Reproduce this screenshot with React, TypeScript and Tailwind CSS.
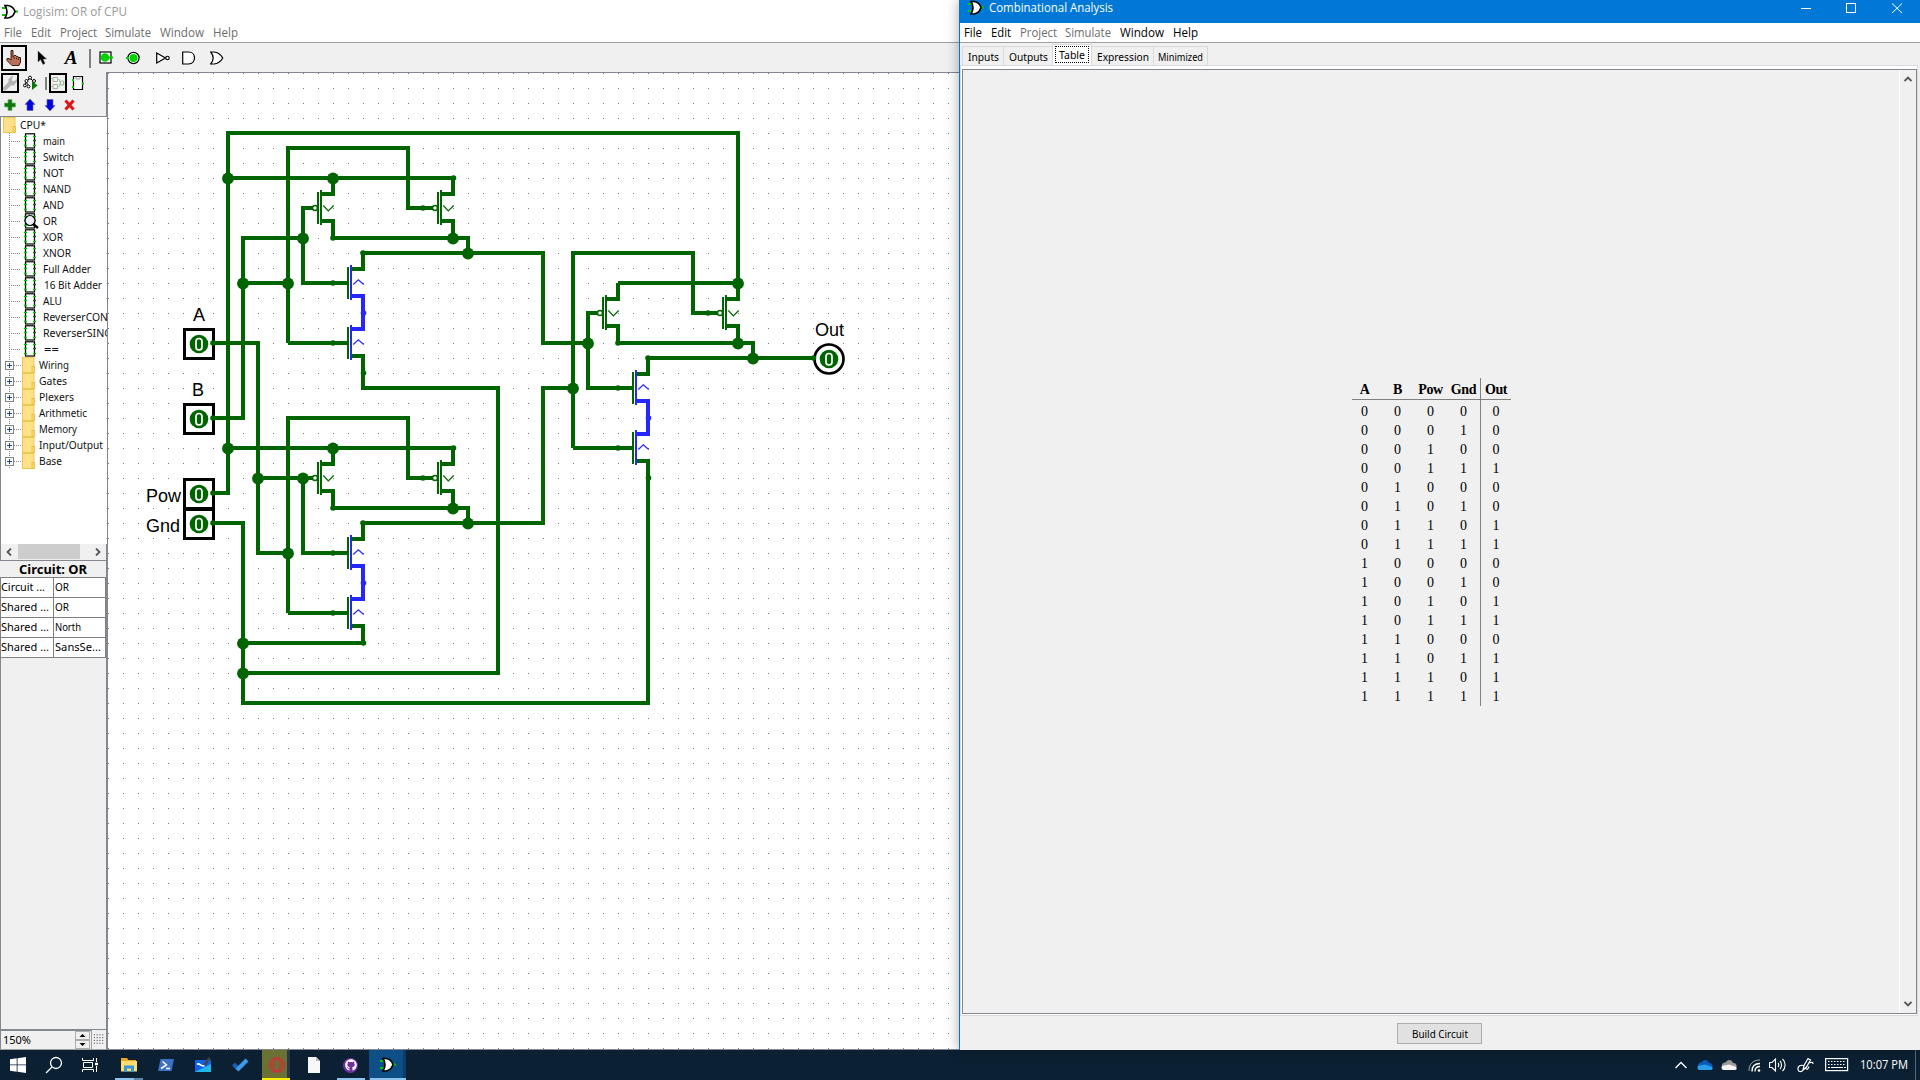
import React from "react";
import { FaGithub } from "react-icons/fa";

const SEGOE = "font-['Open_Sans','Noto_Sans',sans-serif]";
const TAHOMA = "font-['Noto_Sans','Open_Sans',sans-serif]";

/* ---------- shared ---------- */

function GateLogo() {
  return (
    <svg width="16" height="16" viewBox="0 0 16 16" className="shrink-0">
      <path d="M0 4H4M0 11H4" stroke="#00c800" strokeWidth="2" />
      <path d="M12 7.5H16" stroke="#00c800" strokeWidth="2" />
      <path d="M3 1.5H6C9.500 2 12 4.500 13 7.500C12 10.500 9.500 13.500 6 14H3C5.500 10 5.500 5.500 3 1.500Z" fill="#fff" stroke="#000" strokeWidth="1.600" />
    </svg>
  );
}

function Label({ w, children, className = "" }: { w: number; children: string; className?: string }) {
  return (
    <svg width={w} height="18" className={"block shrink-0 overflow-visible " + className}>
      <text x="0" y="13" textLength={w} lengthAdjust="spacingAndGlyphs" fill="currentColor">
        {children}
      </text>
    </svg>
  );
}

/* ---------- toolbars ---------- */

function MainToolbar() {
  return (
    <div className="flex h-[29px] items-center bg-[#f0f0f0] pl-px pt-[1px]">
      <div className="flex h-[26px] w-[26px] items-center justify-center border-2 border-black">
        <svg width="18" height="18" viewBox="0 0 18 18">
          <path d="M6 1.500H8V8L9 6.500H11L11.500 7.500H13L13.500 8.500H15.500V13L14 16.500H7L2 11.500V9.500H4L6 11Z" fill="#b87058" stroke="#3c1c10" strokeWidth="1" />
          <path d="M9 8V10M11.500 8.500V10.500M13.500 9V11" stroke="#3c1c10" strokeWidth=".8" />
        </svg>
      </div>
      <svg width="12" height="16" viewBox="0 0 12 16" className="ml-[10px]">
        <path d="M1 1V12L3.500 9.500L6 14.500L8 13.500L6 9H9.500Z" fill="#000" stroke="#555" strokeWidth=".4" />
      </svg>
      <span className="ml-[15px] w-[14px] text-center font-['Liberation_Serif',serif] text-[19px] leading-[26px] font-bold italic">A</span>
      <div className="ml-[11px] h-[19px] w-[2px] bg-[#808080]" />
      <svg width="14" height="14" viewBox="0 0 14 14" className="ml-[8px]">
        <rect x="1" y="1" width="11" height="11" fill="#fff" stroke="#000" strokeWidth="1.200" />
        <circle cx="6" cy="6.500" r="4.300" fill="#00d200" />
        <path d="M10 6.500H14" stroke="#00d200" strokeWidth="2" />
      </svg>
      <svg width="14" height="14" viewBox="0 0 14 14" className="ml-[13px]">
        <circle cx="7.500" cy="7" r="5.600" fill="#fff" stroke="#000" strokeWidth="1.200" />
        <circle cx="7.500" cy="7" r="4" fill="#00d200" />
        <path d="M0 7H3" stroke="#00d200" strokeWidth="2" />
      </svg>
      <svg width="14" height="14" viewBox="0 0 14 14" className="ml-[16px]">
        <path d="M.7 2V12L9.500 7Z" fill="#fff" stroke="#000" strokeWidth="1.200" />
        <circle cx="11.500" cy="7" r="1.700" fill="#fff" stroke="#000" strokeWidth="1.100" />
      </svg>
      <svg width="14" height="14" viewBox="0 0 14 14" className="ml-[12px]">
        <path d="M.7 1H6.500C14.500 1 14.500 13 6.500 13H.7Z" fill="#fff" stroke="#000" strokeWidth="1.200" />
      </svg>
      <svg width="14" height="14" viewBox="0 0 14 14" className="ml-[14px]">
        <path d="M.7 1H4C9 1.500 11 4 12.800 7C11 10 9 12.500 4 13H.7C4 9 4 5 .7 1Z" fill="#fff" stroke="#000" strokeWidth="1.200" />
      </svg>
    </div>
  );
}

function ExplorerToolbars() {
  return (
    <div className="h-[44px] bg-[#f0f0f0] pl-px">
      <div className="flex h-[22px] items-center">
        <div className="flex h-[20px] w-[18px] items-center justify-center border-2 border-black">
          <svg width="14" height="16" viewBox="0 0 14 16">
            <path d="M2 13.500L8 7.500" stroke="#b4b4b4" strokeWidth="4" strokeLinecap="round" />
            <path d="M5.500 7.500V4L9 1H10.500L9 3.500V6H11.500L14 4V6.500L11 10.500H8Z" fill="#b4b4b4" />
          </svg>
        </div>
        <svg width="15" height="16" viewBox="0 0 15 16" className="ml-[4px]">
          <path d="M2 12L3 7L7 3L11 7M3 7L6 11" stroke="#000" fill="none" />
          <g fill="#fff" stroke="#000">
            <circle cx="7" cy="2.700" r="1.500" />
            <circle cx="3.500" cy="6" r="1.500" />
            <circle cx="1.800" cy="10.500" r="1.400" />
            <circle cx="5.500" cy="11.500" r="1.400" />
            <circle cx="11" cy="6" r="1.500" />
          </g>
          <path d="M9 6V15L14.500 10.500Z" fill="#0a780a" />
        </svg>
        <div className="ml-[7px] h-[13px] w-[2px] bg-[#808080]" />
        <div className="ml-[2px] flex h-[20px] w-[18px] items-center justify-center border-2 border-black">
          <svg width="14" height="16" viewBox="0 0 14 16" fill="none">
            <g stroke="#aaa">
              <path d="M2 2.500H6.500V6.500H2ZM2 9.500H6.500V13.500H2ZM9.500 6H12.500V10H9.500Z" />
            </g>
            <path d="M0 3.500H2M0 11.500H2M6.500 4.500H8.500V7H9.500M6.500 11.500H8.500V9H9.500M12.500 8H14" stroke="#96dc96" />
          </svg>
        </div>
        <svg width="12" height="16" viewBox="0 0 12 16" className="ml-[5px]">
          <path d="M1.500 1.500H10.500V14.500H1.500Z" fill="#fff" stroke="#000" strokeWidth="1.200" />
          <path d="M4 1.500V4H8V1.500" stroke="#999" fill="none" />
          <path d="M0 5H2M0 12H2M10 8.500H12" stroke="#00d200" strokeWidth="2" />
        </svg>
      </div>
      <div className="flex h-[21px] items-center gap-[6px] pl-[2px]">
        <svg width="14" height="14" viewBox="0 0 14 14">
          <path d="M5 1.500H9V5H12.500V9H9V12.500H5V9H1.500V5H5Z" fill="#0a780a" stroke="#7ab47a" strokeWidth=".7" />
        </svg>
        <svg width="14" height="14" viewBox="0 0 14 14">
          <path d="M7 1L12 6.500H10V12.500H4V6.500H2Z" fill="#0000e6" stroke="#668" strokeWidth=".7" />
        </svg>
        <svg width="14" height="14" viewBox="0 0 14 14">
          <path d="M7 13L12 7.500H10V1.500H4V7.500H2Z" fill="#0000e6" stroke="#668" strokeWidth=".7" />
        </svg>
        <svg width="14" height="14" viewBox="0 0 14 14">
          <path d="M2.500 2.500L10.500 11.500M10.500 2.500L2.500 11.500" stroke="#e01414" strokeWidth="3" />
        </svg>
      </div>
    </div>
  );
}

/* ---------- explorer tree ---------- */

const circuits: [string, number][] = [
  ["main", 22], ["Switch", 31], ["NOT", 21], ["NAND", 28], ["AND", 21], ["OR", 14], ["XOR", 20], ["XNOR", 28],
  ["Full Adder", 48], ["16 Bit Adder", 58], ["ALU", 19], ["ReverserCON", 65], ["ReverserSING", 69], ["==", 15],
];
const libraries: [string, number][] = [
  ["Wiring", 30], ["Gates", 28], ["Plexers", 35], ["Arithmetic", 48], ["Memory", 38], ["Input/Output", 64], ["Base", 23],
];

function Folder() {
  return (
    <svg width="13" height="16" viewBox="0 0 13 16" className="shrink-0">
      <rect x=".5" y=".5" width="11.500" height="15" fill="#ffe08a" stroke="#ecc850" />
      <rect x="10" y="9.500" width="2.500" height="6" fill="#ffd868" stroke="#e0b43c" strokeWidth=".7" />
    </svg>
  );
}

function CircuitIcon({ active }: { active: boolean }) {
  return (
    <svg width="14" height="16" viewBox="0 0 14 16" className="shrink-0 overflow-visible">
      <rect x="1.500" y=".8" width="9" height="14.200" fill="#fff" stroke="#000" strokeWidth="1.200" />
      <path d="M0 3.500H3M0 7.500H3M0 12.500H3M9 3.500H12M9 12.500H12" stroke="#00c000" strokeWidth="1.400" />
      <path d="M9 7.500H12" stroke="#006400" strokeWidth="1.400" />
      {active && (
        <>
          <circle cx="6" cy="7.500" r="5" fill="#eeeeff" stroke="#000" strokeWidth="1.200" />
          <path d="M9 11L14 15" stroke="#000" strokeWidth="2.400" />
        </>
      )}
    </svg>
  );
}

function Tree() {
  return (
    <div className={"h-[428px] w-[107px] overflow-hidden border-t border-l border-[#828790] bg-white text-[11px] text-[#111] " + TAHOMA}>
      <div className="flex h-[16px] items-center pl-[2px]">
        <Folder />
        <Label w={26} className="ml-[4px]">CPU*</Label>
      </div>
      {circuits.map(([name, w]) => (
        <div key={name} className="flex h-[16px] items-center pl-[8px]">
          <svg width="15" height="16" viewBox="0 0 15 16" className="shrink-0">
            <path d="M.5 0V16M2 8.500H12" stroke="#888" strokeDasharray="1 1" />
          </svg>
          <CircuitIcon active={name === "OR"} />
          <Label w={w} className={name === "16 Bit Adder" || name === "==" ? "ml-[6px]" : "ml-[5px]"}>{name}</Label>
        </div>
      ))}
      {libraries.map(([name, w]) => (
        <div key={name} className="flex h-[16px] items-center pl-[4px]">
          <svg width="17" height="16" viewBox="0 0 17 16" className="shrink-0">
            <path d="M4.500 0V16M9 8.500H17" stroke="#888" strokeDasharray="1 1" />
            <rect x=".5" y="4.500" width="8" height="8" fill="#f8f8f8" stroke="#848484" />
            <path d="M2 8.500H7M4.500 6V11" stroke="#24489c" />
          </svg>
          <Folder />
          <Label w={w} className="ml-[4px]">{name}</Label>
        </div>
      ))}
    </div>
  );
}

function AttributeTable() {
  const rows = [["Circuit ...", 44, "OR", 14], ["Shared ...", 48, "OR", 14], ["Shared ...", 48, "North", 26], ["Shared ...", 48, "SansSe...", 46]] as const;
  return (
    <div className={"w-[106px] border-t border-l border-[#808080] bg-white text-[11px] text-black " + TAHOMA}>
      {rows.map(([a, aw, b, bw], i) => (
        <div key={i} className="flex h-[20px] border-b border-[#808080]">
          <div className="w-[53px] border-r border-[#808080]"><Label w={aw}>{a}</Label></div>
          <div className="flex-1 border-r border-[#808080]"><Label w={bw} className="ml-px">{b}</Label></div>
        </div>
      ))}
    </div>
  );
}

/* ---------- circuit ---------- */

const G = "#006400";
const B = "#2626ff";

function PType({ x, y }: { x: number; y: number }) {
  return (
    <g fill="none" stroke={G}>
      <path d={`M${x} ${y - 30}V${y - 14}H${x - 12}M${x - 12} ${y + 13}H${x}V${y + 30}`} strokeWidth="4" />
      <path d={`M${x - 15} ${y - 16}V${y + 16}M${x - 12} ${y - 18}V${y + 17}`} strokeWidth="2" />
      <circle cx={x - 18} cy={y} r="2.500" fill="#fff" strokeWidth="1.500" />
      <path d={`M${x - 9.700} ${y - 2.500}L${x - 4.700} ${y + 3}L${x + 0.700} ${y - 2.500}`} strokeWidth="1.200" />
    </g>
  );
}

function NType({ x, y, lower }: { x: number; y: number; lower: boolean }) {
  return (
    <g fill="none">
      <path d={`M${x} ${y - 30}V${y - 14}H${x - 12}`} stroke={lower ? B : G} strokeWidth="4" />
      <path d={`M${x - 12} ${y + 13}H${x}V${y + 30}`} stroke={lower ? G : B} strokeWidth="4" />
      <path d={`M${x - 15} ${y - 16}V${y + 16}`} stroke={G} strokeWidth="2" />
      <path d={`M${x - 12} ${y - 18}V${y + 17}`} stroke={B} strokeWidth="2" />
      <path d={`M${x - 9.700} ${y + 1.500}L${x - 4.700} ${y - 3.300}L${x + 0.700} ${y + 1.500}`} stroke={B} strokeWidth="1.200" />
    </g>
  );
}

/* A CMOS NAND: two p-type transistors in parallel above two n-type in series. */
function Nand({ dx, dy }: { dx: number; dy: number }) {
  return (
    <g transform={`translate(${dx} ${dy})`}>
      <path d="M333 238H468V253M363 253H543M333 178H453M303 206V283H348M301 208H313M288 343V148H408V208H433M288 343H348" fill="none" stroke={G} strokeWidth="4" />
      <PType x={333} y={208} />
      <PType x={453} y={208} />
      <NType x={363} y={283} lower={false} />
      <NType x={363} y={343} lower />
      <g fill={G}>
        {[[333, 238], [453.5, 178], [423, 208], [333, 283], [333, 343], [363, 253], [363.5, 373]].map(([x, y]) => (
          <circle key={`${x}-${y}`} cx={x} cy={y} r="2.800" />
        ))}
        <circle cx="453" cy="238.500" r="5.900" />
        <circle cx="468" cy="253.500" r="5.900" />
      </g>
      <circle cx="363.500" cy="313" r="2.800" fill={B} />
    </g>
  );
}

function Zero({ x, y }: { x: number; y: number }) {
  return (
    <g>
      <circle cx={x} cy={y} r="9.300" fill={G} />
      <rect x={x - 3} y={y - 5.500} width="6" height="11.500" rx="3" fill="none" stroke="#fff" strokeWidth="1.700" />
    </g>
  );
}

function Pin({ y }: { y: number }) {
  return (
    <g>
      <rect x="184.500" y={y - 14.500} width="29" height="29" fill="#fff" stroke="#000" strokeWidth="3" />
      <Zero x={199} y={y} />
      <circle cx="213" cy={y - 1} r="2.800" fill={G} />
    </g>
  );
}

const junctions = [
  [228, 178], [333, 178], [303, 238], [243, 283], [288, 283], [228, 448], [333, 448], [258, 478], [303, 478], [288, 553],
  [243, 643], [243, 673], [588, 343], [573, 388], [738, 283],
];

function Canvas() {
  return (
    <svg width="851" height="976" viewBox="108 73 851 976" className="block bg-white">
      <defs>
        <pattern id="grid" x="108" y="73" width="15" height="15" patternUnits="userSpaceOnUse">
          <rect width="1" height="1" fill="#777" />
        </pattern>
      </defs>
      <rect x="108" y="73" width="851" height="976" fill="url(#grid)" />
      <Nand dx={0} dy={0} />
      <Nand dx={0} dy={270} />
      <Nand dx={285} dy={105} />
      <g fill="none" stroke={G} strokeWidth="4">
        <path d="M213 493H228V133H738V283" />
        <path d="M228 178H333M228 448H333M303 238H243V418H213M243 283H288" />
        <path d="M213 343H258V553H288M258 478H313" />
        <path d="M543 251V343H588M543 525V388H573" />
        <path d="M363 373V388H498V673H243M363 643H243M213 523H243V703H648V478" />
      </g>
      <g fill={G}>
        {junctions.map(([x, y]) => <circle key={`${x}-${y}`} cx={x} cy={y + 0.5} r="5.900" />)}
      </g>
      <Pin y={344} />
      <Pin y={419} />
      <Pin y={494} />
      <Pin y={524} />
      <circle cx="829" cy="359" r="14.500" fill="#fff" stroke="#000" strokeWidth="2.700" />
      <Zero x={829} y={359} />
      <circle cx="813.500" cy="358" r="2.800" fill={G} />
      <g fill="#000" fontSize="18" fontFamily="Liberation Sans, sans-serif">
        <text x="193" y="321">A</text>
        <text x="192" y="396">B</text>
        <text x="146" y="502" textLength="35">Pow</text>
        <text x="146" y="532" textLength="34">Gnd</text>
        <text x="815" y="336" textLength="29">Out</text>
      </g>
    </svg>
  );
}

/* ---------- windows ---------- */

const menus: [string, number, number][] = [["File", 18, 9], ["Edit", 20, 9], ["Project", 37, 8], ["Simulate", 46, 9], ["Window", 44, 9], ["Help", 25, 0]];

function MenuBar({ dim, off }: { dim: string[]; off: string }) {
  return (
    <div className="flex">
      {menus.map(([m, w, gap]) => (
        <div key={m} className={dim.includes(m) ? off : "text-black"} style={{ marginRight: gap }}>
          <Label w={w}>{m}</Label>
        </div>
      ))}
    </div>
  );
}

function LogisimWindow() {
  return (
    <div className="flex h-[1050px] w-[959px] flex-col bg-white">
      <div className={"flex h-[23px] items-center pl-[2px] text-[12px] text-[#999] " + SEGOE}>
        <GateLogo />
        <Label w={104} className="ml-[5px]">Logisim: OR of CPU</Label>
      </div>
      <div className={"flex h-[20px] items-center border-b border-[#a0a0a0] pl-[4px] text-[12px] " + SEGOE}>
        <MenuBar dim={["File", "Edit", "Project", "Simulate", "Window", "Help"]} off="text-[#6d6d6d]" />
      </div>
      <MainToolbar />
      <div className="flex h-[978px]">
        <div className="flex w-[108px] flex-col border-r-2 border-[#828790] bg-[#f0f0f0]">
          <ExplorerToolbars />
          <Tree />
          <div className="flex h-[17px] items-start border-b border-l border-[#828790] bg-[#f0f0f0] pr-[5px] pl-[5px]">
            <svg width="6" height="8" viewBox="0 0 6 8" className="mt-[4px]"><path d="M5 .5L1.500 4L5 7.500" fill="none" stroke="#555" strokeWidth="1.800" /></svg>
            <div className="ml-[6px] h-[15px] w-[62px] bg-[#cdcdcd]" />
            <svg width="6" height="8" viewBox="0 0 6 8" className="mt-[4px] ml-auto"><path d="M1 .5L4.500 4L1 7.500" fill="none" stroke="#555" strokeWidth="1.800" /></svg>
          </div>
          <div className={"flex h-[16px] items-center justify-center pt-[2px] text-[12px] font-bold " + TAHOMA}>
            <Label w={68}>Circuit: OR</Label>
          </div>
          <AttributeTable />
          <div className="flex-1 border-b border-l border-[#828790]" />
          <div className="flex h-[20px] border-b border-[#a0a0a0]">
            <div className={"flex w-[91px] items-center border-t border-l border-[#828790] bg-[#f0f0f0] pr-px pl-[2px] text-[11px] " + TAHOMA}>
              <Label w={28}>150%</Label>
              <div className="ml-auto flex flex-col">
                {[0, 1].map((i) => (
                  <svg key={i} width="15" height="9" viewBox="0 0 15 9">
                    <rect x=".5" y=".5" width="14" height="8" fill="#f0f0f0" stroke="#adadad" />
                    <path d={i ? "M4.500 3H10.500L7.500 6Z" : "M4.500 6H10.500L7.500 3Z"} fill="#000" />
                  </svg>
                ))}
              </div>
            </div>
            <svg width="15" height="19" viewBox="0 0 15 19" className="border-l border-[#a0a0a0]">
              <path d="M2 4.500H13M2 7.500H13M2 10.500H13M2 13.500H13" stroke="#222" strokeDasharray="1 2" />
            </svg>
          </div>
        </div>
        <div className="border-t border-b border-[#828790]"><Canvas /></div>
      </div>
    </div>
  );
}

const headers = ["A", "B", "Pow", "Gnd"];
const outs = [0, 0, 0, 1, 0, 0, 1, 1, 0, 0, 1, 1, 0, 1, 1, 1];

function TruthTable() {
  return (
    <div className="flex h-[328px] font-['Liberation_Serif',serif] text-[14px] text-black">
      <div className="border-r border-[#808080]">
        <div className="ml-[4px] flex h-[22px] border-b border-[#808080] pt-[2px] font-bold tracking-[-0.4px]">
          {headers.map((h, i) => (
            <span key={h} className={"text-center leading-[20px] " + (i ? "w-[33px]" : "w-[29px] pr-[4px]")}>{h}</span>
          ))}
        </div>
        <div className="pt-[2px]">
          {outs.map((_, r) => (
            <div key={r} className="flex h-[19px] leading-[19px]">
              {[8, 4, 2, 1].map((bit) => <span key={bit} className="w-[33px] text-center">{r & bit ? 1 : 0}</span>)}
            </div>
          ))}
        </div>
      </div>
      <div className="w-[30px]">
        <div className="h-[22px] border-b border-[#808080] pt-[2px] text-center leading-[20px] font-bold tracking-[-0.4px]">Out</div>
        <div className="pt-[2px]">
          {outs.map((o, r) => <div key={r} className="h-[19px] text-center leading-[19px]">{o}</div>)}
        </div>
      </div>
    </div>
  );
}

function Tab({ label, w, box, selected = false }: { label: string; w: number; box: string; selected?: boolean }) {
  return selected ? (
    <div className={"flex h-[21px] items-center justify-center border border-b-0 border-[#d9d9d9] bg-white " + box}>
      <div className="mb-px flex h-[17px] w-[34px] items-center justify-center border border-dotted border-black"><Label w={w}>{label}</Label></div>
    </div>
  ) : (
    <div className={"flex h-[19px] items-center justify-center border border-b-0 border-[#d9d9d9] pt-px " + box}>
      <Label w={w}>{label}</Label>
    </div>
  );
}

function AnalysisWindow() {
  return (
    <div className="relative flex h-[1050px] w-[961px] flex-col border-l border-[#0078d7] bg-[#f0f0f0] shadow-[0_0_12px_rgba(0,0,0,0.35)]">
      <div className={"flex h-[23px] items-center bg-[#0078d7] pl-[8px] text-[12px] text-white " + SEGOE}>
        <div className="-mt-[8px]"><GateLogo /></div>
        <Label w={124} className="-mt-[7px] ml-[5px]">Combinational Analysis</Label>
        <svg width="102" height="12" viewBox="0 0 102 12" className="mr-[17px] mb-[8px] ml-auto" fill="none" stroke="#fff">
          <path d="M0 6.500H10M91 1.500L101 11M101 1.500L91 11" />
          <rect x="45.500" y="1.500" width="9" height="9" />
        </svg>
      </div>
      <div className={"flex h-[20px] items-center border-b border-[#a0a0a0] bg-white pl-[4px] text-[12px] " + SEGOE}>
        <MenuBar dim={["Project", "Simulate"]} off="text-[#6d6d6d]" />
      </div>
      <div className={"mt-px flex h-[21px] items-end pl-[2px] text-[11px] text-black " + TAHOMA}>
        <Tab label="Inputs" w={31} box="w-[42px]" />
        <Tab label="Outputs" w={39} box="w-[48px] border-l-0 border-r-0" />
        <Tab label="Table" w={26} box="w-[40px]" selected />
        <Tab label="Expression" w={52} box="w-[62px] border-l-0" />
        <Tab label="Minimized" w={45} box="w-[54px] border-l-0" />
      </div>
      <div className="mr-[2px] h-[951px] border border-[#d9d9d9] bg-white pt-[3px] pr-0 pb-px pl-px">
        <div className="flex h-full border border-[#828790] bg-[#f0f0f0]">
          <div className="flex flex-1 justify-center pt-[308px] pr-[3px]"><TruthTable /></div>
          <div className="flex w-[17px] flex-col items-center justify-between border-l border-white py-[6px]">
            <svg width="8" height="6" viewBox="0 0 8 6"><path d="M.5 5L4 1.500L7.500 5" fill="none" stroke="#555" strokeWidth="1.800" /></svg>
            <svg width="8" height="6" viewBox="0 0 8 6"><path d="M.5 1L4 4.500L7.500 1" fill="none" stroke="#555" strokeWidth="1.800" /></svg>
          </div>
        </div>
      </div>
      <div className="flex flex-1 items-start justify-center pt-[7px] pr-px">
        <button className={"flex h-[21px] w-[85px] items-center justify-center border border-[#adadad] bg-[#e1e1e1] text-[11px] " + TAHOMA}>
          <Label w={56}>Build Circuit</Label>
        </button>
      </div>
    </div>
  );
}

/* ---------- taskbar ---------- */

function Slot({ children, box = "w-[37px]" }: { children: React.ReactNode; box?: string }) {
  return <div className={"flex h-[30px] shrink-0 items-center justify-center " + box}>{children}</div>;
}

function Taskbar() {
  return (
    <div className="flex h-[30px] bg-[#0b2133] text-white">
      <Slot box="w-[36px]">
        <svg width="16" height="16" viewBox="0 0 16 16" fill="#fff">
          <path d="M0 2.300L6.700 1.300V7.500H0ZM7.500 1.200L16 0V7.500H7.500ZM0 8.300H6.700V14.700L0 13.700ZM7.500 8.300H16V16L7.500 14.800Z" />
        </svg>
      </Slot>
      <Slot box="w-[36px]">
        <svg width="18" height="18" viewBox="0 0 18 18" fill="none" stroke="#fff" strokeWidth="1.300">
          <circle cx="11" cy="7" r="5.500" /><path d="M7 11L1 17" />
        </svg>
      </Slot>
      <Slot box="w-[38px] pr-[2px]">
        <svg width="16" height="16" viewBox="0 0 16 16" fill="none" stroke="#fff">
          <path d="M.5 1V3.500H11.500V1M.5 15V12.500H11.500V15M1.500 5.500H10.500V10.500H1.500ZM14.500 1V5M14.500 9V15" />
          <path d="M13 7H16" strokeWidth="2.400" />
        </svg>
      </Slot>
      <Slot box="w-[37px] relative">
        <svg width="18" height="16" viewBox="0 0 18 16">
          <path d="M1 1H7L8.500 3H16V6H1Z" fill="#e8a820" />
          <rect x="1" y="4" width="16" height="10.500" fill="#ffdc70" />
          <path d="M4 15V8.500H14V15H11V11.500H7V15Z" fill="#3a96dc" />
        </svg>
        <div className="absolute bottom-0 left-[5px] h-[2px] w-[28px] bg-[#8cc4ee]" />
        <div className="absolute bottom-0 left-[24px] h-[2px] w-[9px] bg-[#5b87a8]" />
      </Slot>
      <Slot>
        <svg width="18" height="14" viewBox="0 0 18 14">
          <path d="M3.500 1H17L14.500 13H1Z" fill="#3c70c4" />
          <path d="M5.500 3.500L9.500 7L4 10.500M9 10.500H13" stroke="#fff" strokeWidth="1.500" fill="none" />
        </svg>
      </Slot>
      <Slot>
        <svg width="18" height="16" viewBox="0 0 18 16">
          <rect x="1" y="3" width="16" height="12" fill="#1060e8" />
          <path d="M1 15L17 7V15Z" fill="#20b8e8" />
          <path d="M3 7.500C5.500 5 6.500 10.500 10.500 8.500" stroke="#fff" strokeWidth="1.600" fill="none" />
          <path d="M10.500 8L15.500 1" stroke="#444" strokeWidth="2.600" />
        </svg>
      </Slot>
      <Slot>
        <svg width="18" height="14" viewBox="0 0 18 14" fill="none" strokeWidth="4">
          <path d="M2.500 6L7.500 11" stroke="#1a5cb8" /><path d="M6 12L16 2" stroke="#3c9cec" />
        </svg>
      </Slot>
      <Slot box="w-[37px] relative pl-[1px]">
        <div className="absolute top-0 left-[4px] flex h-[30px] w-[28px] border-b-2 border-[#fff000]">
          <div className="w-[25px] bg-[#6b7033]" /><div className="flex-1 bg-[#28394a]" />
        </div>
        <svg width="16" height="16" viewBox="0 0 16 16" fill="none" stroke="#d8283c" strokeWidth="1.100" className="relative">
          <circle cx="8" cy="8" r="7.300" /><ellipse cx="8" cy="8" rx="3.300" ry="6" /><ellipse cx="8" cy="8" rx="5.300" ry="7" strokeWidth=".8" />
        </svg>
      </Slot>
      <Slot>
        <svg width="14" height="16" viewBox="0 0 14 16"><path d="M1 0H9L13 4V16H1Z" fill="#f8f8f8" /><path d="M9 0V4H13Z" fill="#bbb" /></svg>
      </Slot>
      <Slot box="w-[37px] relative">
        <div className="flex h-[15px] w-[15px] items-center justify-center rounded-full bg-[#7030a0]">
          <FaGithub size={12} color="#fff" />
        </div>
        <div className="absolute bottom-0 left-[5px] h-[2px] w-[28px] bg-[#8cc4ee]" />
      </Slot>
      <Slot box="w-[37px] relative bg-[#0f4f88]">
        <div className="absolute top-0 right-0 h-[30px] w-[3px] bg-[#0b3d68]" />
        <div className="absolute bottom-0 left-px h-[2px] w-[36px] bg-[#8cc4ee]" />
        <GateLogo />
      </Slot>
      <div className="ml-auto flex items-center">
        <svg width="12" height="8" viewBox="0 0 12 8" fill="none" stroke="#fff" strokeWidth="1.300"><path d="M.5 7L6 1.500L11.500 7" /></svg>
        {[["#0c5cb8", "#28a0ec"], ["#9a9a9a", "#f4f4f4"]].map(([a, b], i) => (
          <svg key={a} width="16" height="12" viewBox="0 0 16 12" className={i ? "ml-[8px]" : "ml-[10px]"}>
            <path d="M1 8C0 4.500 3 3 4.500 3.500C6 0 11 0 12 4C15 4 16 6 15.500 8Z" fill={a} />
            <path d="M2.500 11C-.5 10 0 6.500 3 6.500L8 5.500L14 7.500C16.500 8 16 11 14 11Z" fill={b} />
          </svg>
        ))}
        <svg width="13" height="13" viewBox="0 0 13 13" fill="none" stroke="#fff" className="ml-[11px]">
          <path d="M1 12C1 5 5 1 12 1" opacity=".6" /><path d="M4 12.500C4 7.500 7 4.500 12 4.500M7 12.500C7 9.500 9 7.500 12 7.500" strokeWidth="1.300" />
          <circle cx="11" cy="11.500" r="1.300" fill="#fff" stroke="none" />
        </svg>
        <svg width="17" height="14" viewBox="0 0 17 14" fill="none" stroke="#fff" strokeWidth="1.100" className="ml-[8px]">
          <path d="M.6 4.500H3L6.500 1V13L3 9.500H.6ZM9 5C10 6 10 8 9 9M11 3C13 5 13 9 11 11M13.500 1C17 4 17 10 13.500 13" />
        </svg>
        <svg width="17" height="16" viewBox="0 0 17 16" fill="none" stroke="#fff" strokeWidth="1.200" className="ml-[11px]">
          <path d="M6 13L7 8.500L11 1.500L13.500 3L9.500 10L6 13ZM7 8.500C3 7.500 .5 9.500 1 12.500C1.500 15.500 5 15 6 13M9 11.500C10 13.500 11.500 11 12 9.500M12.500 6C15 4.500 16 5.500 16 7" />
        </svg>
        <svg width="24" height="14" viewBox="0 0 24 14" fill="none" stroke="#fff" className="ml-[11px]">
          <rect x=".6" y=".6" width="22" height="12" strokeWidth="1.200" />
          <path d="M3 3.500H21M3 6.500H21" strokeDasharray="1.500 1.500" /><path d="M3 9.500H5M6 9.500H18M19 9.500H21" />
        </svg>
        <div className={"ml-[11px] text-[12px] " + SEGOE}><Label w={48}>10:07 PM</Label></div>
        <div className="ml-[7px] h-[30px] w-px bg-[#5a6874]" />
        <div className="w-[4px]" />
      </div>
    </div>
  );
}

export default function App() {
  return (
    <div className="flex h-[1080px] w-[1920px] flex-col overflow-hidden bg-white">
      <div className="flex h-[1050px]">
        <LogisimWindow />
        <AnalysisWindow />
      </div>
      <Taskbar />
    </div>
  );
}
